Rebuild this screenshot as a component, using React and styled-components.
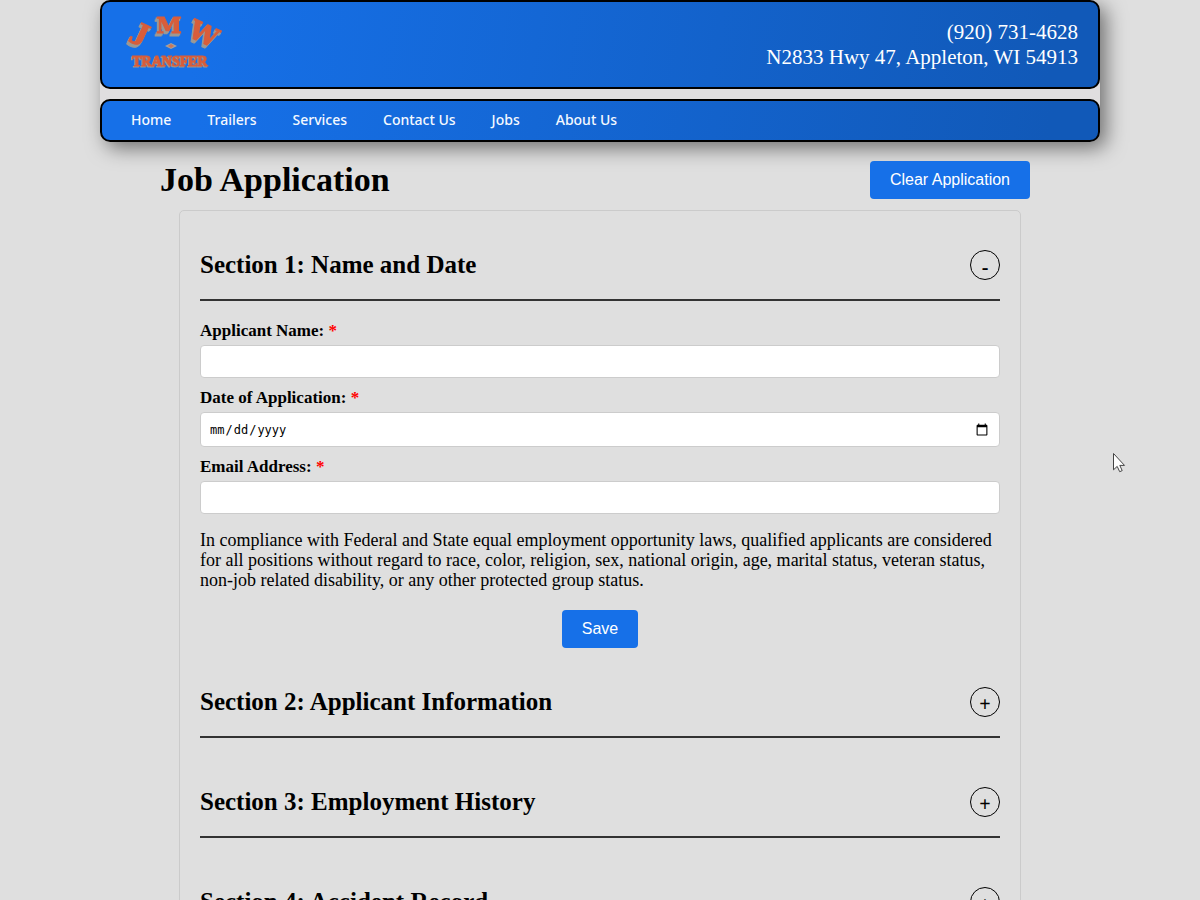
import React, { useState } from "react";
import styled, { createGlobalStyle } from "styled-components";

const serif = `"Palatino Linotype", Palatino, "Liberation Serif", serif`;

const GlobalStyle = createGlobalStyle`
  *, *::before, *::after { box-sizing: border-box; }
  body {
    margin: 0;
    background: #dfdfdf;
    color: #000;
    font-family: ${serif};
    font-size: 17px;
    line-height: 20px;
  }
`;

const Page = styled.div`
  position: relative;
  height: 100vh;
  overflow: hidden;
`;

const SiteTop = styled.div`
  display: flex;
  flex-direction: column;
  gap: 10px;
  max-width: 1000px;
  margin: 0 auto;
  border-radius: 10px;
  background: #e0dedf;
  box-shadow: 6px 6px 20px rgba(0, 0, 0, 0.5);
`;

const bar = `
  display: flex;
  align-items: center;
  border: 2px solid #000;
  border-radius: 10px;
  background: linear-gradient(100deg, #1670e8 10%, #1159b8 95%);
`;

const Banner = styled.header`
  ${bar}
  justify-content: space-between;
  padding: 10px 20px;
`;

const Contact = styled.address`
  color: #fff;
  font-style: normal;
  font-size: 21px;
  line-height: 25px;
  text-align: right;
`;

const Nav = styled.nav`
  ${bar}
  gap: 36px;
  padding: 9px 29px 10px;
`;

const NavLink = styled.a`
  color: #f4f9ff;
  font: 500 14px/20px "Noto Sans", sans-serif;
  text-decoration: none;
`;

const Main = styled.main`
  max-width: 900px;
  margin: 0 auto;
  padding: 19px 20px 0 10px;
`;

const TitleRow = styled.div`
  display: flex;
  align-items: center;
  justify-content: space-between;
`;

const Title = styled.h1`
  margin: 0;
  font-size: 34px;
  line-height: 38px;
`;

const PrimaryButton = styled.button`
  padding: 10px 20px;
  border: 0;
  border-radius: 4px;
  background: #1670e8;
  color: #fff;
  font: 16px/18px "Liberation Sans", Arial, sans-serif;
`;

const Panel = styled.form`
  margin: 11px 9px 0 19px;
  padding: 0 20px;
  border: 1px solid #cbcbcb;
  border-radius: 5px;
`;

const Section = styled.section`
  margin-bottom: ${(p) => (p.$open ? 0 : 10)}px;
`;

const SectionHead = styled.div`
  display: flex;
  align-items: center;
  justify-content: space-between;
  padding: 39px 0 19px;
  border-bottom: 2px solid #333;
`;

const SectionTitle = styled.h2`
  margin: 0;
  font-size: 25px;
  line-height: 30px;
`;

const Toggle = styled.button`
  width: 30px;
  height: 30px;
  padding: 4px 0 0;
  border: 1px solid #000;
  border-radius: 50%;
  background: transparent;
  color: #000;
  font: bold 20px/24px ${serif};
`;

const SectionBody = styled.div`
  display: flex;
  flex-direction: column;
  gap: 10px;
  padding-top: 20px;
`;

const Field = styled.div`
  display: flex;
  flex-direction: column;
  gap: 4px;
`;

const Label = styled.label`
  font-weight: bold;
`;

const Required = styled.span`
  color: #f00;
`;

const Input = styled.input`
  width: 100%;
  height: ${(p) => (p.type === "date" ? 35 : 33)}px;
  padding: 8px;
  border: 1px solid #ccc;
  border-radius: 4px;
  background: #fff;
  color: #000;
  font: 12px "DejaVu Sans Mono", monospace;

  &::-webkit-calendar-picker-indicator {
    width: 14px;
    height: 14px;
  }
`;

const Notice = styled.p`
  margin: 6px 0 10px;
  font-size: 18px;
`;

const Actions = styled.div`
  display: flex;
  justify-content: center;
`;

const Pointer = styled.svg`
  position: absolute;
  left: 1113px;
  top: 453px;
`;

const LogoSvg = styled.svg`
  display: block;
  overflow: visible;
`;

const LogoLetters = styled.g`
  fill: #d85d3b;
  stroke: #d85d3b;
  stroke-width: 1px;
  font-family: "DejaVu Serif", serif;
  font-weight: bold;
  text-anchor: middle;
  filter: drop-shadow(-1px 1px 0 #9b9994) drop-shadow(-1px 2px 0 #9b9994);
`;

const LogoWord = styled.text`
  fill: #d85d3b;
  stroke: #d85d3b;
  stroke-width: 1px;
  font: bold 14px "Liberation Serif", serif;
  text-anchor: middle;
  filter: drop-shadow(-1px 1px 0 #9b9994);
`;

function Logo() {
  return (
    <LogoSvg width="100" height="65" viewBox="0 0 100 65" role="img" aria-label="JMW Transfer">
      <LogoLetters>
        <text fontFamily="Liberation Serif, serif" fontSize="34" transform="translate(13 32) rotate(25)">
          J
        </text>
        <text fontSize="23" x="47" y="21">
          M
        </text>
        <text fontSize="26" transform="translate(78 30) rotate(25)">
          W
        </text>
      </LogoLetters>
      <LogoWord x="48" y="54">
        TRANSFER
      </LogoWord>
      <path d="M43 34l6-3 6 3-6 3z" fill="#a8a099" />
      <path d="M46 34l3-2 3 2-3 2z" fill="#c8775c" />
    </LogoSvg>
  );
}

const fields = [
  { id: "applicant", label: "Applicant Name:", type: "text" },
  { id: "date", label: "Date of Application:", type: "date" },
  { id: "email", label: "Email Address:", type: "email" },
];

function NameAndDate() {
  return (
    <SectionBody>
      {fields.map((f) => (
        <Field key={f.id}>
          <Label htmlFor={f.id}>
            {f.label} <Required>*</Required>
          </Label>
          <Input id={f.id} type={f.type} />
        </Field>
      ))}
      <Notice>
        In compliance with Federal and State equal employment opportunity laws, qualified applicants are
        considered for all positions without regard to race, color, religion, sex, national origin, age,
        marital status, veteran status, non-job related disability, or any other protected group status.
      </Notice>
      <Actions>
        <PrimaryButton type="button">Save</PrimaryButton>
      </Actions>
    </SectionBody>
  );
}

const sections = [
  "Section 1: Name and Date",
  "Section 2: Applicant Information",
  "Section 3: Employment History",
  "Section 4: Accident Record",
];

const links = ["Home", "Trailers", "Services", "Contact Us", "Jobs", "About Us"];

export default function App() {
  const [open, setOpen] = useState(0);
  return (
    <Page>
      <GlobalStyle />
      <SiteTop>
        <Banner>
          <Logo />
          <Contact>
            (920) 731-4628
            <br />
            N2833 Hwy 47, Appleton, WI 54913
          </Contact>
        </Banner>
        <Nav>
          {links.map((l) => (
            <NavLink key={l} href="#">
              {l}
            </NavLink>
          ))}
        </Nav>
      </SiteTop>
      <Main>
        <TitleRow>
          <Title>Job Application</Title>
          <PrimaryButton type="button">Clear Application</PrimaryButton>
        </TitleRow>
        <Panel>
          {sections.map((title, i) => (
            <Section key={title} $open={i === open}>
              <SectionHead>
                <SectionTitle>{title}</SectionTitle>
                <Toggle
                  type="button"
                  aria-label={title}
                  aria-expanded={i === open}
                  onClick={() => setOpen(i === open ? -1 : i)}
                >
                  {i === open ? "-" : "+"}
                </Toggle>
              </SectionHead>
              {i === open && <NameAndDate />}
            </Section>
          ))}
        </Panel>
      </Main>
      <Pointer width="13" height="20" viewBox="0 0 13 20" aria-hidden="true">
        <path d="M.5.5v16.3l3.7-3.4 2.5 5.3 2.5-1.1-2.4-5.2h4.7z" fill="#fff" stroke="#444" />
      </Pointer>
    </Page>
  );
}
